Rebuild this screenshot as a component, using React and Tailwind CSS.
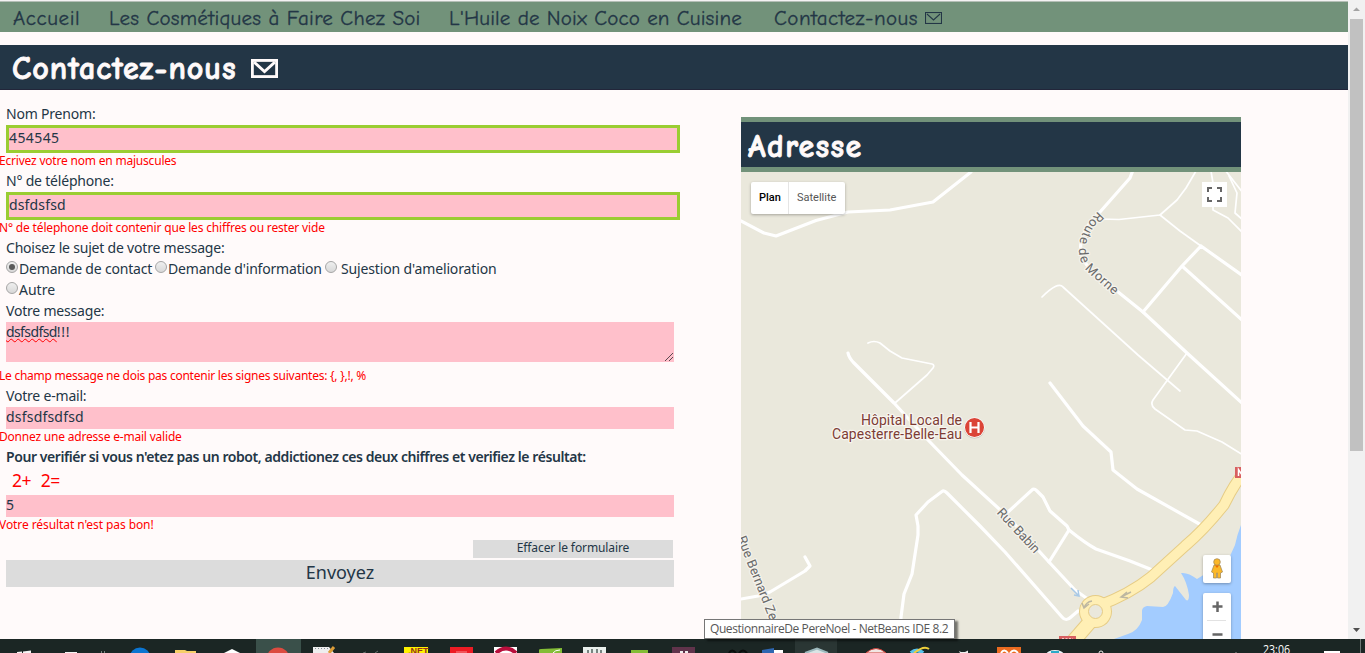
import React from "react";

const comic = "font-['Comic_Sans_MS','Comic_Neue','Open_Sans',sans-serif]";

function Envelope({ className, stroke }) {
  return (
    <svg viewBox="0 0 26 18" className={className} fill="none" stroke="currentColor" strokeWidth={stroke} preserveAspectRatio="none">
      <rect x={stroke / 2} y={stroke / 2} width={26 - stroke} height={18 - stroke} />
      <path d="M3 3 L13 12 L23 3" />
    </svg>
  );
}

function Label({ children }) {
  return <div className="h-[21px] pl-1.5 text-[14px] leading-[19px] tracking-[-0.2px] whitespace-nowrap">{children}</div>;
}

function ErrorLine({ children, className = "tracking-[-0.17px]" }) {
  return <div className={`-ml-px h-[18px] text-[12px] leading-[15px] whitespace-nowrap text-[#ff0000] ${className}`}>{children}</div>;
}

function Radio({ checked }) {
  return (
    <span className="mb-1 flex size-3 shrink-0 items-center justify-center rounded-full border border-[#a6a6a6] bg-linear-to-b from-[#efefef] to-[#d8d8d8]">
      {checked && <span className="size-1.5 rounded-full bg-[#5a5a5a]" />}
    </span>
  );
}

function Form() {
  return (
    <form className="flex w-[741px] shrink-0 flex-col pt-3.5">
      <Label>Nom Prenom:</Label>
      <div className="ml-1.5 h-7 w-[674px] border-[3px] border-[#9acd32] bg-[#ffc0cb] text-[14px] leading-5 tracking-[0.4px]">454545</div>
      <ErrorLine className="tracking-[-0.2px]">Ecrivez votre nom en majuscules</ErrorLine>
      <Label>N° de téléphone:</Label>
      <div className="ml-1.5 h-7 w-[674px] border-[3px] border-[#9acd32] bg-[#ffc0cb] text-[14px] leading-5 tracking-[0.15px]">dsfdsfsd</div>
      <ErrorLine>N° de télephone doit contenir que les chiffres ou rester vide</ErrorLine>
      <Label>Choisez le sujet de votre message:</Label>
      <div className="flex h-[21px] items-center pb-0.5 pl-1.5 text-[14px] leading-[19px] tracking-[-0.19px] whitespace-nowrap">
        <div className="flex w-[149px] items-center gap-px"><Radio checked />Demande de contact</div>
        <div className="flex w-[170px] items-center gap-px"><Radio />Demande d'information</div>
        <div className="flex items-center gap-1 tracking-[-0.14px]"><Radio />Sujestion d'amelioration</div>
      </div>
      <div className="flex h-[21px] items-center gap-px pb-0.5 pl-1.5 text-[14px] leading-[19px]"><Radio />Autre</div>
      <Label>Votre message:</Label>
      <div className="mb-1.5 ml-1.5 flex h-10 w-[668px] justify-between bg-[#ffc0cb] text-[14px] leading-[19px]">
        <span>
          <span className="tracking-[-0.6px] underline decoration-[#ff0000] decoration-wavy decoration-1 underline-offset-1">dsfsdfsd</span>
          <span className="tracking-[0.7px]">!!!</span>
        </span>
        <svg viewBox="0 0 10 10" className="size-2.5 self-end" stroke="#5a4a50" strokeWidth="1">
          <path d="M1 9 L9 1 M5 9 L9 5" />
        </svg>
      </div>
      <ErrorLine className="tracking-[-0.25px]">{"Le champ message ne dois pas contenir les signes suivantes: {, },!, %"}</ErrorLine>
      <Label>Votre e-mail:</Label>
      <div className="ml-1.5 h-[22px] w-[668px] bg-[#ffc0cb] text-[14px] leading-5 tracking-[0.2px]">dsfsdfsdfsd</div>
      <ErrorLine className="tracking-[-0.2px]">Donnez une adresse e-mail valide</ErrorLine>
      <div className="h-[21px] pl-1.5 text-[14px] leading-[19px] font-semibold tracking-[-0.43px] whitespace-nowrap">
        Pour verifiér si vous n'etez pas un robot, addictionez ces deux chiffres et verifiez le résultat:
      </div>
      <div className="flex h-[27px] gap-2.5 pl-3 text-[17.5px] leading-[25px] tracking-[-0.6px] text-[#ff0000]">
        <span>2+</span><span>2=</span>
      </div>
      <div className="ml-1.5 h-[22px] w-[668px] bg-[#ffc0cb] text-[14px] leading-5">5</div>
      <ErrorLine className="tracking-[-0.08px]">Votre résultat n'est pas bon!</ErrorLine>
      <button type="button" className="mt-[5px] ml-[473px] h-[18px] w-[200px] bg-[#dcdcdc] pb-0.5 text-[12px] leading-4 tracking-[-0.1px]">Effacer le formulaire</button>
      <button type="button" className="mt-0.5 ml-1.5 h-[27px] w-[668px] bg-[#dcdcdc] pb-[3px] text-[18px] leading-[24px]">Envoyez</button>
    </form>
  );
}

const wideRoads = [
  "M741 221 L764 233 L776 236 L816 220.500 L848 212 L890 210 L933 202 L971 172",
  "M1133 170 L1130 178 L1100 212 C1078 232 1074 254 1092 271 L1143 312 L1187 353 L1243 404",
  "M1201 246 L1243 276 M1201 246 L1182 266 L1143 312 M1182 266 L1243 321",
  "M848 353 Q849 358 854 363 L894 403 L928 440 L962 475 L1008 517 L1049 562 L1075 590 L1092 602",
  "M900 641 L901 617 L904 594 L912 574 L918 535 L918 526 L916 515 L928 502 L942 491.500 Q944 490 947 493 L980 526 L1005 552 L1062 617 Q1066 622 1071 617 L1078 611",
  "M1008 512 L1032 490 Q1034 488 1037 491 L1043 497 L1050 511 L1067 526 L1069 530 Q1085 543 1096 549 L1130 561 L1155 571",
  "M1069 530 L1049 562",
  "M1050 383 L1083 426 L1111 452 L1113 470 L1137 489 L1203 526",
  "M741 599 L758 596 L770 592 L805 571 L810 566 L805 557",
];
const thinRoads = [
  "M1100 219 L1119 219.500 L1160 215 L1177 200 L1186 188 L1196 171",
  "M1160 215 L1180 231 L1201 246",
  "M1042 297 Q1058 281 1063 287 L1138 355 L1180 391",
  "M1211 171 L1213 183 L1213 210 L1228 218 L1243 233",
  "M1225 170 L1243 193",
  "M1229 176 L1237 193 L1235 213 L1243 220",
  "M868 343 Q874 340 880 343 L890 351 L902 358 L932 364 Q935 365 933 368 L927 375 L895 403",
  "M1187 353 L1153 400 Q1150 405 1155 409 L1185 430 L1197 431 L1222 442 L1243 455",
];

function MapCanvas() {
  const n1 = "M1247 469 Q1235 482 1224 505 Q1204 530 1185 546 L1151 577 Q1130 594 1098 606";
  return (
    <svg viewBox="741 172 500 467" className="block h-[467px] w-[500px]" fill="none" fontFamily="Roboto, sans-serif">
      <defs>
        <path id="morne" d="M1101 214 C1081 233 1075 259 1096 274 L1128 302" />
        <path id="babin" d="M998.500 511 L1042 558" />
        <path id="bernard" d="M740 537 L780 638" />
      </defs>
      <rect x="741" y="172" width="500" height="467" fill="#eae8dc" />
      <path fill="#a3ccff" d="M1241 525 Q1237 535 1235 545 L1230 556 L1205 574 L1197 579 Q1188 572 1181 573 Q1187 582 1189 595 Q1189 602 1186 600 L1175 586 Q1173 587 1173 593 Q1168 607 1163 607 L1147 606 Q1142 607 1142 611 L1142 620 Q1138 631 1128 634 L1114 639 H1241 Z" />
      <g stroke="#fff" strokeLinecap="round" strokeLinejoin="round">
        <g strokeWidth="3.2">{wideRoads.map((d) => <path key={d} d={d} />)}</g>
        <g strokeWidth="1.7">{thinRoads.map((d) => <path key={d} d={d} />)}</g>
      </g>
      <g stroke="#e6cc85">
        <path d={n1} strokeWidth="11.5" />
        <path d="M1096 615 L1070 645" strokeWidth="15" />
        <circle cx="1095.500" cy="611.500" r="16.500" fill="#e6cc85" stroke="none" />
      </g>
      <g stroke="#ffefb5">
        <path d={n1} strokeWidth="9.5" />
        <path d="M1096 615 L1070 645" strokeWidth="13" />
        <circle cx="1095.500" cy="611.500" r="15.500" fill="#ffefb5" stroke="none" />
      </g>
      <circle cx="1095.500" cy="611.500" r="7" fill="#eae8dc" stroke="#e6cc85" />
      <g stroke="#bdb7a1" strokeWidth="1.500">
        <path d="M1131 592 L1121 597 M1127 592 L1121 597 L1128 598 M1092 601 Q1086 602 1084 608 M1082 603 L1084 608 L1089 604" />
        <path stroke="#a9c9e6" d="M1071 588 L1079 596 M1078 590 L1079 596 L1074 595" />
      </g>
      <rect x="1235" y="467" width="8" height="11" fill="#d85f60" />
      <path d="M1238.500 476 V469.500 L1242 475" stroke="#fff" strokeWidth="1.500" />
      <rect x="1059" y="636" width="17" height="5" fill="#d85f60" />
      <path d="M1062 638.500 H1073" stroke="#f3c9c4" strokeDasharray="2 1.500" />
      <g fill="#696969" stroke="#f5f3ec" strokeWidth="2.500" paintOrder="stroke" strokeLinejoin="round" fontSize="13">
        <text dy="4"><textPath href="#morne" textLength="97">Route de Morne</textPath></text>
        <text dy="3"><textPath href="#babin" textLength="56">Rue Babin</textPath></text>
        <text dy="3" fontSize="13"><textPath href="#bernard" textLength="89">Rue Bernard Ze</textPath></text>
      </g>
      <g fill="#7d3c35" stroke="#f7f5ef" strokeWidth="2.500" paintOrder="stroke" strokeLinejoin="round" fontSize="14">
        <text x="861" y="425" textLength="101">Hôpital Local de</text>
        <text x="832" y="439" textLength="130">Capesterre-Belle-Eau</text>
      </g>
      <circle cx="974.500" cy="428" r="10.500" fill="#c9c5ba" />
      <circle cx="974.500" cy="427.500" r="10.300" fill="#fff" />
      <circle cx="974.500" cy="427.500" r="9.500" fill="#db4437" />
      <path d="M970.500 422 V433 M978.500 422 V433 M970.500 427.500 H978.500" stroke="#fff" strokeWidth="2.200" />
    </svg>
  );
}

function MapPanel() {
  return (
    <section className="mt-[27px] h-[522px] w-[500px] shrink-0">
      <h2 className={`h-[55px] border-y-[5px] border-[#72927a] bg-[#233646] pl-[7px] text-[32px] leading-[49px] font-bold text-[#fffafa] [-webkit-text-stroke:0.8px] ${comic}`}>
        <span className="tracking-[1.4px]">Adresse</span>
      </h2>
      <div className="relative h-[467px] overflow-hidden font-[Roboto,sans-serif]">
        <MapCanvas />
        <div className="absolute top-2.5 left-2.5 flex h-8 rounded-[2px] bg-white text-[11px] leading-[31px] shadow-[0_1px_3px_rgba(0,0,0,0.3)]">
          <span className="w-[38px] border-r border-[#e5e5e5] pl-2 font-medium text-black">Plan</span>
          <span className="w-14 pl-2 text-[#565656]">Satellite</span>
        </div>
        <div className="absolute top-2.5 right-3.5 flex size-[25px] items-center justify-center bg-white">
          <svg viewBox="0 0 15 15" className="size-[15px]" fill="none" stroke="#666" strokeWidth="2">
            <path d="M1 5 V1 H5 M10 1 H14 V5 M14 10 V14 H10 M5 14 H1 V10" />
          </svg>
        </div>
        <div className="absolute top-[383px] right-2.5 flex size-7 items-center justify-center rounded-[2px] bg-white pb-0.5 shadow-[0_1px_3px_rgba(0,0,0,0.3)]">
          <svg viewBox="0 0 12 21" className="h-[21px] w-3" fill="#fbb829" stroke="#9b8458" strokeWidth=".7">
            <path d="M3 7 H9 L11.500 14 L9.500 15 V20 H6.500 V15 H5.500 V20 H2.500 V15 L.500 14 Z" />
            <circle cx="6" cy="4" r="3.300" />
            <path d="M4 7.500 L6 10 L8 7.500 Z" fill="#ef6c00" stroke="none" />
          </svg>
        </div>
        <div className="absolute top-[421px] right-2.5 flex h-[56px] w-7 flex-col items-center rounded-[2px] bg-white shadow-[0_1px_3px_rgba(0,0,0,0.3)]">
          <svg viewBox="0 0 28 56" className="h-14 w-7" fill="none">
            <path d="M14.500 8.500 V19 M9.500 13.500 H19.500 M9.500 41.500 H19.500" stroke="#666" strokeWidth="2.500" />
            <path d="M4 27.500 H23" stroke="#e2e2e2" />
          </svg>
        </div>
      </div>
    </section>
  );
}

function TaskIcons() {
  return (
    <svg viewBox="0 639 1365 14" className="block h-3.5 w-full">
      <rect y="639" width="1365" height="14" fill="#1b2624" />
      <rect x="256" y="639" width="45" height="14" fill="#3a504a" />
      <rect x="795" y="639" width="42" height="14" fill="#2a3634" />
      <path fill="#f4f4f4" d="M17 652 L22 651.500 V653 H17 Z M23 651.500 L31 650.500 V653 H23 Z M65 652 H77 V653 H65 Z" />
      <path d="M101.500 651 V653 M104.500 651 V653" stroke="#788380" />
      <circle cx="140" cy="658" r="10.500" fill="#0b75d1" />
      <path fill="#f5cf68" d="M175 650 H185 L187 651 H196 V653 H175 Z" />
      <path fill="#fff" d="M224 653 L232 649 L240 653 Z" />
      <circle cx="278" cy="659" r="11.500" fill="#dc4b40" />
      <path fill="#eee" d="M313 647 H329 L334 653 H313 Z" />
      <path d="M334 647 L329 653" stroke="#dc9d38" strokeWidth="3" />
      <path d="M315 648.500 H328" stroke="#849099" strokeDasharray="1 2" />
      <path d="M363 653 L366 652 M375 653 L378 651" stroke="#68716e" />
      <rect x="404" y="647" width="24" height="6" fill="#fff200" />
      <text x="408" y="654" fontSize="9" fontWeight="700" fontFamily="Liberation Sans" fill="#94321c">.NET</text>
      <rect x="450" y="647" width="23" height="6" fill="#ed1c24" />
      <path d="M456 652 H467" stroke="#f78b8e" />
      <rect x="494" y="647" width="23" height="6" fill="#fff" />
      <path d="M496 653 Q506 644 516 653" fill="none" stroke="#b90e3c" strokeWidth="4" />
      <path fill="#83bd36" d="M539 653 V650 Q539 649 541 649 L562 648 V653 Z M631 650 H648 V653 H631 Z" />
      <path d="M553 653 Q555 650 560 650" stroke="#fff" fill="none" />
      <rect x="583" y="647" width="23" height="6" fill="#e9efec" />
      <path d="M588 650 V653 M592 649 V653 M597 649 V653 M601 650 V653" stroke="#53615d" strokeWidth="1.5" />
      <rect x="672" y="647" width="23" height="6" fill="#60334b" />
      <path d="M680 652 H688" stroke="#eee" strokeWidth="2" strokeDasharray="3 2" />
      <path d="M729 653 Q732 648 736 653 M739 653 Q743 648 747 653" stroke="#090d0c" strokeWidth="2" fill="none" />
      <path fill="#2d66b1" d="M762 650 L774 648 V653 H762 Z" /><rect x="774" y="650" width="9" height="3" fill="#fff" />
      <path d="M805 653 L817 648.500 L828 653" stroke="#9db9bd" strokeWidth="2" fill="#d9e4e4" />
      <path d="M866 653 Q876 644 886 653 Z" fill="#f2e6e3" stroke="#cf3e36" />
      <path d="M911 653 Q917 648 923 653" stroke="#57c2ec" strokeWidth="4" fill="none" />
      <path d="M914 653 Q924 645 929 649" stroke="#efd03b" strokeWidth="2" fill="none" />
      <path d="M959 651 L961 652 H965 L968 650.500 V653 H960 Z" fill="#eee" />
      <path fill="#eb6b20" d="M997 647 H1021 V653 H997 Z" />
      <path d="M1001 653 Q1004 648 1008 653 M1010 653 Q1014 648 1018 653" stroke="#fff" strokeWidth="2" fill="none" />
      <ellipse cx="1055" cy="655" rx="9" ry="5" fill="#e5f3f8" /><path d="M1051 652 H1059" stroke="#2baac8" strokeWidth="2" />
      <circle cx="1101" cy="653" r="2" fill="none" stroke="#eee" />
      <path d="M1236 652 V653" stroke="#999" />
      <text x="1263" y="654" fontSize="12" textLength="27" lengthAdjust="spacingAndGlyphs" fontFamily="Open Sans" fill="#fff">23:06</text>
      <rect x="1324" y="651" width="16" height="2" fill="#fff" />
      <path d="M1360.500 639 V653" stroke="#6d7775" />
    </svg>
  );
}

export default function App() {
  return (
    <div className="relative flex h-[653px] w-[1365px] flex-col overflow-hidden bg-[#fffafa] font-['Noto_Sans','Open_Sans',sans-serif] text-[#233646]">
      <div className="flex h-[639px]">
        <main className="w-[1348px] overflow-hidden">
          <div className="h-0.5 border-b border-[#b4bfb6] bg-[#f3f2f2]" />
          <nav className={`flex h-[30px] bg-[#72927a] pl-[13px] text-[21px] leading-[33px] whitespace-nowrap [-webkit-text-stroke:0.3px] ${comic}`}>
            <a className="w-24 tracking-[0.6px]">Accueil</a>
            <a className="w-[340px] tracking-[0.25px]">Les Cosmétiques à Faire Chez Soi</a>
            <a className="w-[325px] tracking-[0.15px]">L'Huile de Noix Coco en Cuisine</a>
            <a className="flex"><span className="w-[151px] tracking-[0.45px]">Contactez-nous</span><Envelope className="mt-[10px] h-3 w-[17px]" stroke={1.6} /></a>
          </nav>
          <h1 className={`mt-[13px] flex h-[45px] items-center border-b border-[#22263a] bg-[#233646] pl-3 text-[32px] leading-[44px] font-bold text-[#fffafa] ${comic}`}>
            <span className="w-[239px] pt-1 tracking-[1px] whitespace-nowrap [-webkit-text-stroke:0.8px]">Contactez-nous</span><Envelope className="mt-0.5 h-[19px] w-[27px]" stroke={2.7} />
          </h1>
          <div className="flex">
            <Form />
            <MapPanel />
          </div>
        </main>
        <div className="flex w-[17px] flex-col items-center justify-between bg-[#f1f1f1]">
          <div className="flex w-full flex-col items-center">
            <svg viewBox="0 0 17 17" className="h-[19px] w-[17px]"><path d="M5 10 L8.500 6.500 L12 10 Z" fill="#a3a3a3" /></svg>
            <div className="h-[432px] w-[13px] bg-[#c1c1c1]" />
          </div>
          <svg viewBox="0 0 17 17" className="size-[17px]"><path d="M5 6 L8.500 10 L12 6 Z" fill="#505050" /></svg>
        </div>
      </div>
      <footer className="h-3.5"><TaskIcons /></footer>
      <div className="absolute top-[619px] left-[704px] h-5 w-[251px] border border-[#767676] bg-white pl-[5px] font-['Open_Sans',sans-serif] text-[12px] leading-[18px] whitespace-nowrap text-[#575757] shadow-[3px_2px_2px_rgba(0,0,0,0.5)]">
        <span className="tracking-[-0.42px]">QuestionnaireDe PereNoel - NetBeans IDE 8.2</span>
      </div>
    </div>
  );
}
